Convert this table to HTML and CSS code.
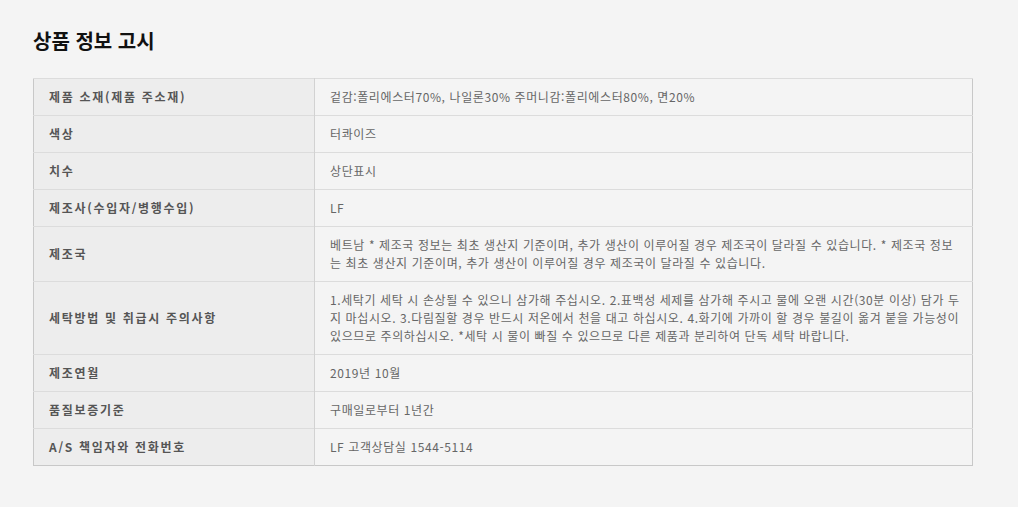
FILE: index.html
```html
<!DOCTYPE html>
<html lang="ko">
<head>
<meta charset="utf-8">
<link rel="stylesheet" href="styles.css">
</head>
<body>
<div class="page">
  <h2 class="title">상품 정보 고시</h2>
  <table class="notice">
    <tbody>
      <tr><th>제품 소재(제품 주소재)</th><td>겉감:폴리에스터70%, 나일론30% 주머니감:폴리에스터80%, 면20%</td></tr>
      <tr><th>색상</th><td>터콰이즈</td></tr>
      <tr><th>치수</th><td>상단표시</td></tr>
      <tr><th>제조사(수입자/병행수입)</th><td>LF</td></tr>
      <tr><th>제조국</th><td>베트남 * 제조국 정보는 최초 생산지 기준이며, 추가 생산이 이루어질 경우 제조국이 달라질 수 있습니다. * 제조국 정보는 최초 생산지 기준이며, 추가 생산이 이루어질 경우 제조국이 달라질 수 있습니다.</td></tr>
      <tr><th>세탁방법 및 취급시 주의사항</th><td>1.세탁기 세탁 시 손상될 수 있으니 삼가해 주십시오. 2.표백성 세제를 삼가해 주시고 물에 오랜 시간(30분 이상) 담가 두지 마십시오. 3.다림질할 경우 반드시 저온에서 천을 대고 하십시오. 4.화기에 가까이 할 경우 불길이 옮겨 붙을 가능성이 있으므로 주의하십시오. *세탁 시 물이 빠질 수 있으므로 다른 제품과 분리하여 단독 세탁 바랍니다.</td></tr>
      <tr><th>제조연월</th><td>2019년 10월</td></tr>
      <tr><th>품질보증기준</th><td>구매일로부터 1년간</td></tr>
      <tr><th>A/S 책임자와 전화번호</th><td>LF 고객상담실 1544-5114</td></tr>
    </tbody>
  </table>
</div>
</body>
</html>
```

FILE: styles.css
```css
html, body {
  margin: 0;
  padding: 0;
  background: #f4f4f4;
}
body {
  font-family: "Noto Sans CJK KR", "Noto Sans", sans-serif;
  color: #666;
}
.page {
  padding: 28px 46px 40px 33px;
}
.title {
  margin: 0 0 24px;
  font-size: 20px;
  line-height: 26px;
  font-weight: 700;
  color: #111;
  letter-spacing: 0;
}
.notice {
  width: 940px;
  border-collapse: collapse;
  border: 1px solid #c8c8c8;
  table-layout: fixed;
}
.notice th,
.notice td {
  border-top: 1px solid #dcdcdc;
  font-size: 12px;
  line-height: 18px;
  text-align: left;
  vertical-align: middle;
}
.notice th {
  width: 265px;
  padding: 9px 0 9px 15px;
  background: #ededed;
  color: #555;
  font-weight: 700;
  letter-spacing: 1.7px;
  border-right: 1px solid #d2d2d2;
}
.notice td {
  padding: 9px 9px 9px 15px;
  background: #f4f4f4;
  color: #666;
  letter-spacing: 0.6px;
  word-break: break-all;
}
```
